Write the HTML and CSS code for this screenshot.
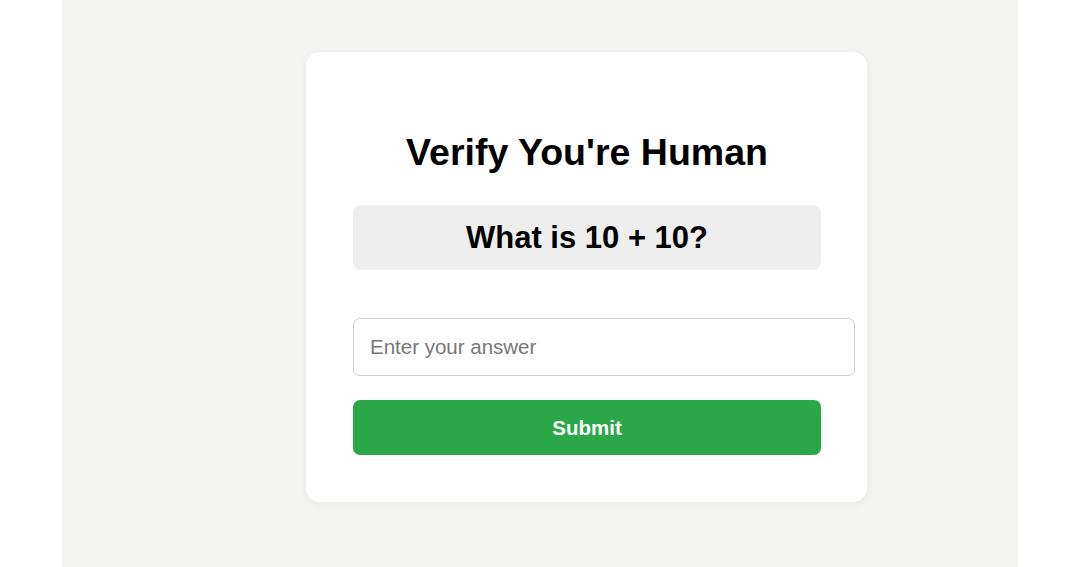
FILE: index.html
```html
<!doctype html>
<html lang="en">
<head>
    <meta charset="UTF-8">
    <meta name="viewport" content="width=device-width, initial-scale=1.0">
    <title>Verify</title>
    <link rel="stylesheet" href="styles.css">
</head>
<body>
<div class="page">
    <div class="captcha">
        <h1 class="captcha__title">Verify You're Human</h1>
        <div class="captcha__question">What is 10 + 10?</div>
        <input class="captcha__input" type="text" placeholder="Enter your answer">
        <button class="captcha__btn" type="button">Submit</button>
    </div>
</div>
</body>
</html>
```

FILE: styles.css
```css
body {
    margin: 0;
    background-color: #ffffff;
    font-family: "Liberation Sans", Arial, sans-serif;
}

.page {
    margin: 0 62px;
    height: 567px;
    padding-top: 52px;
    box-sizing: border-box;
    background-color: #f4f4f3;
    overflow: hidden;
}

.captcha {
    width: 561px;
    margin-left: 244px;
    padding: 80px 46px 47px 47px;
    box-sizing: border-box;
    background-color: #ffffff;
    border-radius: 14px;
    box-shadow: 0 2px 10px rgba(0, 0, 0, 0.06);
}

.captcha__title {
    margin: 0 0 33px 0;
    font-size: 37.5px;
    line-height: 40px;
    font-weight: 700;
    text-align: center;
    color: #000000;
}

.captcha__question {
    height: 65px;
    line-height: 65px;
    background-color: #eeeeee;
    border-radius: 8px;
    font-size: 31px;
    font-weight: 700;
    text-align: center;
    color: #000000;
}

.captcha__input {
    display: block;
    width: 100%;
    height: 56px;
    margin-top: 48px;
    padding: 0 16px;
    border: 1px solid #cfcfcf;
    border-radius: 7px;
    font-family: inherit;
    font-size: 20.5px;
    color: #222222;
}

.captcha__input::placeholder {
    color: #777777;
}

.captcha__btn {
    display: block;
    width: 100%;
    height: 55px;
    margin-top: 24px;
    border: none;
    border-radius: 7px;
    background-color: #2aa746;
    color: #ffffff;
    font-family: inherit;
    font-size: 20.5px;
    font-weight: 700;
    cursor: pointer;
}
```
